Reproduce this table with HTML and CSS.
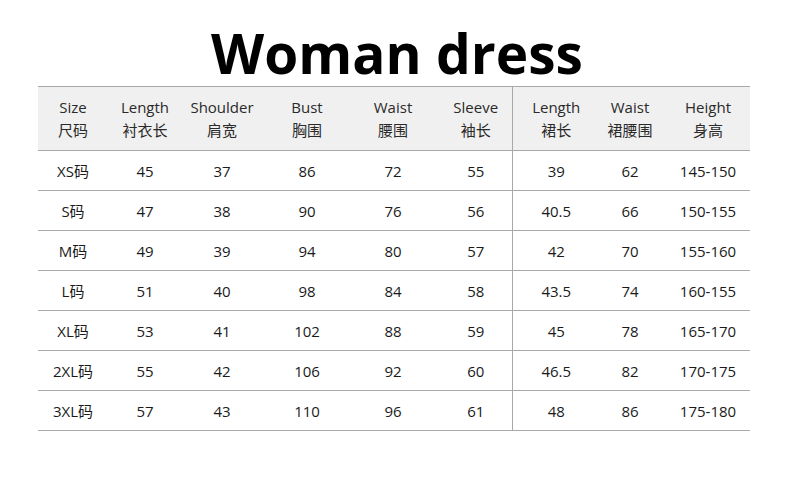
FILE: index.html
```html
<!DOCTYPE html>
<html lang="zh">
<head>
<meta charset="utf-8">
<link rel="stylesheet" href="styles.css">
</head>
<body>
<div class="page">
  <h1 class="title">Woman dress</h1>
  <table class="sizes">
    <colgroup>
      <col class="c1"><col class="c2"><col class="c3"><col class="c4"><col class="c5"><col class="c6"><col class="c7"><col class="c8"><col class="c9">
    </colgroup>
    <thead>
      <tr>
        <th>Size<br>尺码</th>
        <th>Length<br>衬衣长</th>
        <th>Shoulder<br>肩宽</th>
        <th>Bust<br>胸围</th>
        <th>Waist<br>腰围</th>
        <th class="pad">Sleeve<br>袖长</th>
        <th class="split">Length<br>裙长</th>
        <th>Waist<br>裙腰围</th>
        <th class="pad">Height<br>身高</th>
      </tr>
    </thead>
    <tbody>
      <tr><td>XS码</td><td>45</td><td>37</td><td>86</td><td>72</td><td class="pad">55</td><td class="split">39</td><td>62</td><td class="pad">145-150</td></tr>
      <tr><td>S码</td><td>47</td><td>38</td><td>90</td><td>76</td><td class="pad">56</td><td class="split">40.5</td><td>66</td><td class="pad">150-155</td></tr>
      <tr><td>M码</td><td>49</td><td>39</td><td>94</td><td>80</td><td class="pad">57</td><td class="split">42</td><td>70</td><td class="pad">155-160</td></tr>
      <tr><td>L码</td><td>51</td><td>40</td><td>98</td><td>84</td><td class="pad">58</td><td class="split">43.5</td><td>74</td><td class="pad">160-155</td></tr>
      <tr><td>XL码</td><td>53</td><td>41</td><td>102</td><td>88</td><td class="pad">59</td><td class="split">45</td><td>78</td><td class="pad">165-170</td></tr>
      <tr><td>2XL码</td><td>55</td><td>42</td><td>106</td><td>92</td><td class="pad">60</td><td class="split">46.5</td><td>82</td><td class="pad">170-175</td></tr>
      <tr><td>3XL码</td><td>57</td><td>43</td><td>110</td><td>96</td><td class="pad">61</td><td class="split">48</td><td>86</td><td class="pad">175-180</td></tr>
    </tbody>
  </table>
</div>
</body>
</html>
```
FILE: styles.css
```css
html, body {
  margin: 0;
  padding: 0;
  background: #ffffff;
}
.page {
  width: 790px;
  height: 500px;
  padding-top: 20px;
  box-sizing: border-box;
  font-family: "Open Sans", "Noto Sans CJK SC", sans-serif;
  color: #1a1a1a;
}
.title {
  margin: 0;
  height: 66px;
  text-align: center;
  font-family: "Open Sans", sans-serif;
  font-weight: 700;
  font-size: 55px;
  line-height: 66px;
  color: #000;
  padding-left: 4px;
}
.sizes {
  margin-left: 38px;
  width: 712px;
  border-collapse: collapse;
  table-layout: fixed;
  font-size: 15px;
}
.c1 { width: 70px; }
.c2 { width: 74px; }
.c3 { width: 80px; }
.c4 { width: 90px; }
.c5 { width: 82px; }
.c6 { width: 78px; }
.c7 { width: 88px; }
.c8 { width: 60px; }
.c9 { width: 90px; }
.sizes th {
  background: #f0f0f0;
  font-weight: 400;
  height: 63px;
  padding: 0;
  line-height: 23px;
  border-top: 1px solid #a8a8a8;
  border-bottom: 1px solid #a8a8a8;
  color: #2a2a2a;
}
.sizes td {
  height: 39px;
  padding: 0;
  text-align: center;
  border-bottom: 1px solid #a8a8a8;
  color: #1a1a1a;
}
.sizes .pad {
  padding-left: 6px;
}
.sizes .split {
  border-left: 1px solid #a8a8a8;
}
```
